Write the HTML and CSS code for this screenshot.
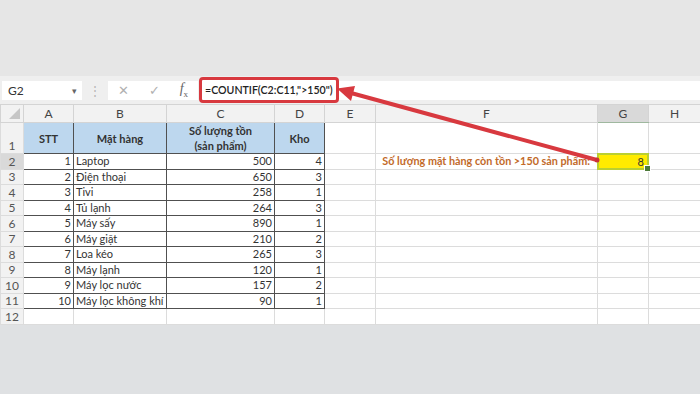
FILE: index.html
```html
<!DOCTYPE html>
<html lang="vi">
<head>
    <meta charset="UTF-8">
    <title>COUNTIF</title>
    <link rel="stylesheet" href="styles.css">
</head>
<body>
    <div class="app">
        <div class="top-band"></div>

        <div class="formula-bar">
            <div class="name-box">
                <span>G2</span>
                <span class="caret">&#9662;</span>
            </div>
            <div class="grip">&#8942;</div>
            <div class="fx-buttons">
                <span class="fx-btn">&#10005;</span>
                <span class="fx-btn">&#10003;</span>
                <span class="fx-btn fx"><i>f</i><sub>x</sub></span>
            </div>
            <div class="formula-input">
                <span class="formula-mark">=COUNTIF(C2:C11,"&gt;150")</span>
            </div>
        </div>

        <table class="sheet">
            <colgroup>
                <col class="c-row"><col class="c-a"><col class="c-b"><col class="c-c"><col class="c-d">
                <col class="c-e"><col class="c-f"><col class="c-g"><col class="c-h">
            </colgroup>
            <thead>
                <tr class="col-heads">
                    <th class="corner"><span class="corner-tri"></span></th>
                    <th>A</th><th>B</th><th>C</th><th>D</th><th>E</th><th>F</th><th class="sel-head">G</th><th>H</th>
                </tr>
            </thead>
            <tbody id="rows">
                <tr class="head-row">
                    <td class="rn">1</td>
                    <td class="t th-cell">STT</td>
                    <td class="t th-cell">Mặt hàng</td>
                    <td class="t th-cell">Số lượng tồn<br>(sản phẩm)</td>
                    <td class="t th-cell">Kho</td>
                    <td></td><td></td><td></td><td></td>
                </tr>
            </tbody>
        </table>

        <div class="status-area"></div>

        <svg class="arrow" width="700" height="394" viewBox="0 0 700 394">
            <line x1="597" y1="160" x2="351" y2="93" stroke="#d8393f" stroke-width="4" stroke-linecap="round"/>
            <polygon points="337,88.5 355,86 351,101" fill="#d8393f"/>
            <circle cx="597" cy="160" r="2.5" fill="#c8333a"/>
        </svg>
    </div>

    <script>
        const items = [
            [1, 'Laptop', 500, 4],
            [2, 'Điện thoại', 650, 3],
            [3, 'Tivi', 258, 1],
            [4, 'Tủ lạnh', 264, 3],
            [5, 'Máy sấy', 890, 1],
            [6, 'Máy giặt', 210, 2],
            [7, 'Loa kéo', 265, 3],
            [8, 'Máy lạnh', 120, 1],
            [9, 'Máy lọc nước', 157, 2],
            [10, 'Máy lọc không khí', 90, 1]
        ];

        const rows = document.getElementById('rows');

        items.forEach((item, i) => {
            const tr = document.createElement('tr');
            tr.className = 'data-row';
            let extra = '<td></td><td></td><td></td><td></td>';
            if (i === 0) {
                extra = '<td></td><td class="note">Số lượng mặt hàng còn tồn &gt;150 sản phẩm:</td>' +
                    '<td class="result"><span class="result-box">8<span class="handle"></span></span></td><td></td>';
            }
            tr.innerHTML = `
                <td class="rn ${i === 0 ? 'sel-row' : ''}">${i + 2}</td>
                <td class="t num">${item[0]}</td>
                <td class="t">${item[1]}</td>
                <td class="t num">${item[2]}</td>
                <td class="t num">${item[3]}</td>
                ${extra}
            `;
            rows.appendChild(tr);
        });

        const last = document.createElement('tr');
        last.className = 'data-row';
        last.innerHTML = '<td class="rn">12</td><td></td><td></td><td></td><td></td><td></td><td></td><td></td><td></td>';
        rows.appendChild(last);
    </script>
</body>
</html>
```

FILE: styles.css
```css
body {
    margin: 0;
    font-family: 'Lato', 'Liberation Sans', sans-serif;
    color: #333;
    background: #e4e4e4;
}

.app {
    position: relative;
    width: 700px;
    height: 394px;
    overflow: hidden;
    background: #e4e4e4;
}

.top-band {
    height: 76px;
    background: #e6e6e6;
}

.formula-bar {
    height: 28px;
    display: flex;
    align-items: center;
    background: #efefef;
}

.name-box {
    width: 80px;
    height: 19px;
    margin-left: 2px;
    padding: 0 5px 0 6px;
    box-sizing: border-box;
    display: flex;
    justify-content: space-between;
    align-items: center;
    background: #fff;
    font-size: 12px;
    color: #333;
}

.caret {
    font-size: 9px;
    color: #666;
}

.grip {
    width: 26px;
    text-align: center;
    color: #b5b5b5;
    font-size: 12px;
}

.fx-buttons {
    width: 90px;
    height: 19px;
    display: flex;
    align-items: center;
    justify-content: space-around;
    background: #fff;
    color: #b0b0b0;
    font-size: 13px;
}

.fx-btn.fx {
    font-family: 'Liberation Serif', serif;
    color: #666;
    font-size: 14px;
}

.fx-btn sub {
    font-size: 9px;
}

.formula-input {
    flex: 1;
    height: 19px;
    margin-left: 2px;
    display: flex;
    align-items: center;
    background: #fff;
}

.formula-mark {
    height: 20px;
    padding: 0 3px 0 3px;
    margin-left: -1px;
    border: 3px solid #d8393f;
    border-radius: 4px;
    display: flex;
    align-items: center;
    font-size: 10.6px;
    font-weight: 600;
    color: #222;
    background: #fff;
}

.sheet {
    border-collapse: collapse;
    table-layout: fixed;
    width: 700px;
    background: #fff;
    font-size: 11px;
}

.c-row { width: 23px; }
.c-a { width: 50px; }
.c-b { width: 93px; }
.c-c { width: 108px; }
.c-d { width: 50px; }
.c-e { width: 51px; }
.c-f { width: 222px; }
.c-g { width: 51px; }
.c-h { width: 52px; }

.sheet td,
.sheet th {
    border: 1px solid #dcdcdc;
    padding: 0 2px;
    white-space: nowrap;
    overflow: visible;
}

.col-heads th {
    height: 17px;
    background: #f2f2f2;
    border-color: #d4d4d4;
    font-weight: normal;
    color: #444;
    font-size: 12px;
}

.col-heads .sel-head {
    background: #d9d9d9;
    border-bottom: 1px solid #9fb89f;
}

.corner {
    position: relative;
}

.corner-tri {
    position: absolute;
    right: 3px;
    bottom: 3px;
    width: 0;
    height: 0;
    border-left: 11px solid transparent;
    border-bottom: 11px solid #c6c6c6;
}

.rn {
    background: #f2f2f2;
    text-align: center;
    color: #555;
    font-size: 12px;
    vertical-align: bottom;
}

.rn.sel-row {
    background: #d9d9d9;
}

.head-row td {
    height: 29px;
}

.data-row td {
    height: 14.5px;
    line-height: 14px;
}

.sheet .t {
    border: 1px solid #505050;
}

.th-cell {
    background: #bdd7ee;
    text-align: center;
    font-weight: bold;
    line-height: 15px;
    color: #333;
}

.num {
    text-align: right;
}

.sheet .note {
    padding-right: 7px;
    text-align: right;
    font-weight: bold;
    font-size: 10.8px;
    color: #c26a2a;
}

.sheet .result {
    position: relative;
    padding: 0;
}

.result-box {
    position: absolute;
    left: -1px;
    top: -1px;
    right: -1px;
    bottom: -1px;
    padding-right: 3px;
    border: 2px solid #b9cf32;
    background: #ffeb00;
    text-align: right;
    line-height: 13px;
}

.handle {
    position: absolute;
    right: -4px;
    bottom: -4px;
    width: 5px;
    height: 5px;
    background: #4d7a3a;
    border: 1px solid #fff;
}

.status-area {
    height: 72px;
    background: #dfe1e3;
}

.arrow {
    position: absolute;
    left: 0;
    top: 0;
    pointer-events: none;
}
```
